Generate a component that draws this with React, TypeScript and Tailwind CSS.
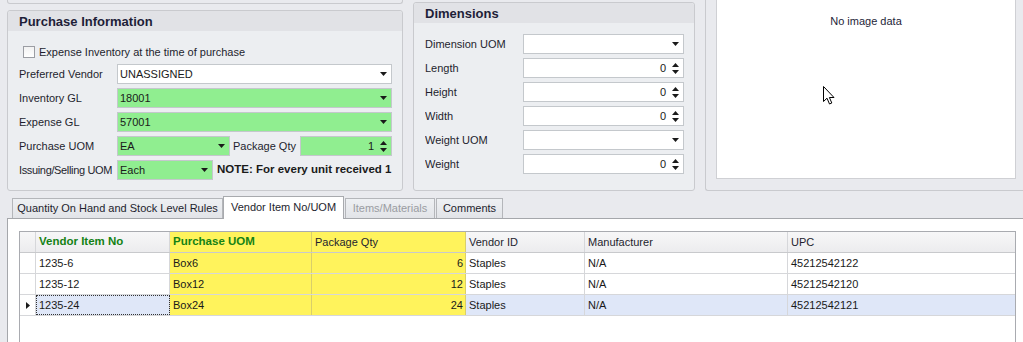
import React from "react";

const font = { fontFamily: '"Liberation Sans", Arial, sans-serif' };

function Arrow() {
  return (
    <svg width="7" height="4" viewBox="0 0 7 4" className="shrink-0">
      <path d="M0 0 H7 L3.5 4 Z" fill="#1a1a1a" />
    </svg>
  );
}

function Spin() {
  return (
    <div className="flex flex-col items-center gap-[3px] shrink-0">
      <svg width="7" height="4" viewBox="0 0 7 4">
        <path d="M0 4 H7 L3.5 0 Z" fill="#1a1a1a" />
      </svg>
      <svg width="7" height="4" viewBox="0 0 7 4">
        <path d="M0 0 H7 L3.5 4 Z" fill="#1a1a1a" />
      </svg>
    </div>
  );
}

function Combo({ value, green, w }: { value: string; green?: boolean; w: string }) {
  return (
    <div
      className={`${w} h-[20px] shrink-0 flex items-center justify-between pl-[2px] pr-[4px] border ${
        green ? "bg-[#90ee90] border-[#c4c8cc]" : "bg-white border-[#c4c8cc]"
      }`}
    >
      <span className="text-[11px] text-[#1a1a1a] leading-none">{value}</span>
      <Arrow />
    </div>
  );
}

function SpinBox({ value, green, w }: { value: string; green?: boolean; w: string }) {
  return (
    <div
      className={`${w} h-[20px] shrink-0 flex items-center justify-end gap-[6px] pr-[4px] border ${
        green ? "bg-[#90ee90] border-[#c4c8cc]" : "bg-white border-[#c4c8cc]"
      }`}
    >
      <span className="text-[11px] text-[#1a1a1a] leading-none">{value}</span>
      <Spin />
    </div>
  );
}

function Label({ children, w, tight }: { children: React.ReactNode; w: string; tight?: boolean }) {
  return (
    <div
      className={`${w} text-[11px] text-[#1e1e2e] leading-none shrink-0 whitespace-nowrap overflow-hidden ${
        tight ? "tracking-[-0.35px]" : ""
      }`}
    >
      {children}
    </div>
  );
}

const cols = [
  { w: "w-[16px]" },
  { w: "w-[134px]", title: "Vendor Item No", green: true },
  { w: "w-[142px]", title: "Purchase UOM", green: true, yellow: true },
  { w: "w-[154px]", title: "Package Qty", yellow: true, right: true },
  { w: "w-[119px]", title: "Vendor ID" },
  { w: "w-[203px]", title: "Manufacturer" },
  { w: "flex-1", title: "UPC" },
];

const rows = [
  ["1235-6", "Box6", "6", "Staples", "N/A", "45212542122"],
  ["1235-12", "Box12", "12", "Staples", "N/A", "45212542120"],
  ["1235-24", "Box24", "24", "Staples", "N/A", "45212542121"],
];

export default function App() {
  return (
    <div className="w-[1023px] h-[342px] overflow-hidden bg-[#e9eaee] relative" style={font}>
      {/* Top area */}
      <div className="flex h-[191px]">
        {/* Left column */}
        <div className="pl-[7px] w-[403px] shrink-0 flex flex-col">
          <div className="h-[4px] border-x border-b border-[#c9cace] rounded-b-[3px] w-[396px]" />
          <div className="mt-[6px] flex-1 border border-[#c9cace] rounded-[3px] bg-[#eceef1] w-[396px] flex flex-col">
            <div className="h-[20px] bg-[#e1e2e6] flex items-center pl-[11px] rounded-t-[3px]">
              <span className="text-[13px] font-bold text-[#1e1e38] leading-none">Purchase Information</span>
            </div>
            <div className="pl-[11px] pt-[15px] flex flex-col">
              <div className="flex items-center h-[12px] pl-[4px]">
                <div className="w-[12px] h-[12px] border border-[#9b9da3] bg-gradient-to-b from-[#f2f2f2] to-white" />
                <span className="ml-[4px] text-[11px] text-[#1e1e2e] leading-none">
                  Expense Inventory at the time of purchase
                </span>
              </div>
              <div className="mt-[6px] flex items-center h-[20px]">
                <Label w="w-[98px]">Preferred Vendor</Label>
                <Combo value="UNASSIGNED" w="w-[275px]" />
              </div>
              <div className="mt-[4px] flex items-center h-[20px]">
                <Label w="w-[98px]">Inventory GL</Label>
                <Combo value="18001" green w="w-[275px]" />
              </div>
              <div className="mt-[4px] flex items-center h-[20px]">
                <Label w="w-[98px]">Expense GL</Label>
                <Combo value="57001" green w="w-[275px]" />
              </div>
              <div className="mt-[4px] flex items-center h-[20px]">
                <Label w="w-[98px]">Purchase UOM</Label>
                <Combo value="EA" green w="w-[113px]" />
                <Label w="w-[67px] ml-[3px]">Package Qty</Label>
                <SpinBox value="1" green w="w-[92px]" />
              </div>
              <div className="mt-[4px] flex items-center h-[20px]">
                <Label w="w-[98px]" tight>
                  Issuing/Selling UOM
                </Label>
                <Combo value="Each" green w="w-[96px]" />
                <span className="ml-[4px] text-[11.5px] font-bold text-[#1a1a1a] leading-none whitespace-nowrap">
                  NOTE: For every unit received 1
                </span>
              </div>
            </div>
          </div>
        </div>

        {/* Dimensions */}
        <div className="ml-[10px] mt-[2px] w-[282px] shrink-0 border border-[#c9cace] rounded-[3px] bg-[#eceef1] flex flex-col">
          <div className="h-[20px] bg-[#e1e2e6] flex items-center pl-[11px] rounded-t-[3px]">
            <span className="text-[13px] font-bold text-[#1e1e38] leading-none">Dimensions</span>
          </div>
          <div className="pl-[11px] pt-[11px] flex flex-col gap-[4px]">
            <div className="flex items-center h-[20px]">
              <Label w="w-[98px]">Dimension UOM</Label>
              <Combo value="" w="w-[161px]" />
            </div>
            {["Length", "Height", "Width"].map((l) => (
              <div key={l} className="flex items-center h-[20px]">
                <Label w="w-[98px]">{l}</Label>
                <SpinBox value="0" w="w-[161px]" />
              </div>
            ))}
            <div className="flex items-center h-[20px]">
              <Label w="w-[98px]">Weight UOM</Label>
              <Combo value="" w="w-[161px]" />
            </div>
            <div className="flex items-center h-[20px]">
              <Label w="w-[98px]">Weight</Label>
              <SpinBox value="0" w="w-[161px]" />
            </div>
          </div>
        </div>

        {/* Image panel */}
        <div className="ml-[10px] w-[330px] shrink-0 border-l border-b border-[#c9cace] rounded-bl-[3px] pl-[10px] pb-[11px] flex">
          <div className="w-[300px] h-full bg-white border border-[#cfd0d4] border-t-0 flex justify-center">
            <span className="mt-[16px] text-[11px] text-[#1e1e38] leading-none h-fit">No image data</span>
          </div>
        </div>
      </div>

      {/* Tabs */}
      <div className="mt-[5px] flex items-end h-[22px] pl-[12px] relative z-10">
        <div className="h-[20px] w-[211px] border border-b-0 border-[#b4b6ba] bg-gradient-to-b from-[#eef0f3] to-[#e2e4e8] flex items-center justify-center">
          <span className="text-[11px] text-[#1e1e2e] leading-none">Quantity On Hand and Stock Level Rules</span>
        </div>
        <div className="h-[23px] -mb-px w-[121px] border border-b-0 border-[#a8aaae] bg-white flex items-center justify-center">
          <span className="text-[11px] text-[#1e1e2e] leading-none -mt-[2px]">Vendor Item No/UOM</span>
        </div>
        <div className="h-[20px] w-[90px] ml-[1px] border border-b-0 border-[#b4b6ba] bg-gradient-to-b from-[#eef0f3] to-[#e2e4e8] flex items-center justify-center">
          <span className="text-[11px] text-[#9a9ca2] leading-none">Items/Materials</span>
        </div>
        <div className="h-[20px] w-[67px] ml-[1px] border border-b-0 border-[#b4b6ba] bg-gradient-to-b from-[#eef0f3] to-[#e2e4e8] flex items-center justify-center">
          <span className="text-[11px] text-[#1e1e2e] leading-none">Comments</span>
        </div>
      </div>

      {/* Tab page */}
      <div className="ml-[7px] border-t border-l border-[#a5a7ab] bg-white h-[130px] pl-[11px] pt-[12px]">
        <div className="w-[997px] border-l border-t border-r border-[#a9abb0] h-full flex flex-col">
          {/* header */}
          <div className="flex h-[21px] border-b border-[#c8c9cc] bg-gradient-to-b from-[#f7f7f8] to-[#ececee]">
            {cols.map((c, i) => (
              <div
                key={i}
                className={`${c.w} shrink-0 h-full border-r ${
                  c.yellow ? "bg-[#fff35c] border-[#d9cf6a]" : "border-[#d6d7da]"
                } flex items-center pl-[3px] leading-none ${
                  c.green ? "font-bold text-[11.5px] text-[#148214]" : "text-[11px] text-[#1e1e2e]"
                } ${i === 6 ? "border-r-0" : ""}`}
              >
                {c.title ?? ""}
              </div>
            ))}
          </div>
          {rows.map((r, ri) => {
            const sel = ri === 2;
            return (
              <div key={ri} className="flex h-[21px] border-b border-[#d6d7da]">
                <div className="w-[16px] shrink-0 h-full border-r border-[#d6d7da] bg-white flex items-center justify-center">
                  {sel && (
                    <svg width="4" height="7" viewBox="0 0 4 7">
                      <path d="M0 0 L4 3.5 L0 7 Z" fill="#1a1a1a" />
                    </svg>
                  )}
                </div>
                {r.map((v, ci) => {
                  const c = cols[ci + 1];
                  const bg = c.yellow ? "bg-[#fff35c]" : sel ? "bg-[#dfe7f8]" : "bg-white";
                  const bd = c.yellow ? "border-[#d9cf6a]" : "border-[#d6d7da]";
                  return (
                    <div
                      key={ci}
                      className={`${c.w} shrink-0 h-full border-r ${bd} ${bg} flex items-center ${
                        c.right ? "justify-end pr-[2px]" : "pl-[3px]"
                      } text-[11px] text-[#1a1a1a] leading-none ${ci === 5 ? "border-r-0" : ""} ${
                        sel && ci === 0 ? "outline outline-1 outline-dotted outline-[#333] -outline-offset-1" : ""
                      }`}
                    >
                      {v}
                    </div>
                  );
                })}
              </div>
            );
          })}
        </div>
      </div>

      {/* mouse cursor */}
      <svg className="absolute left-[823px] top-[86px]" width="13" height="20" viewBox="0 0 13 20">
        <path
          d="M0.5 0.5 L0.5 15.5 L4 12.2 L6.5 18 L8.8 17 L6.4 11.5 L11 11.5 Z"
          fill="white"
          stroke="black"
          strokeWidth="1"
          strokeLinejoin="miter"
        />
      </svg>
    </div>
  );
}
